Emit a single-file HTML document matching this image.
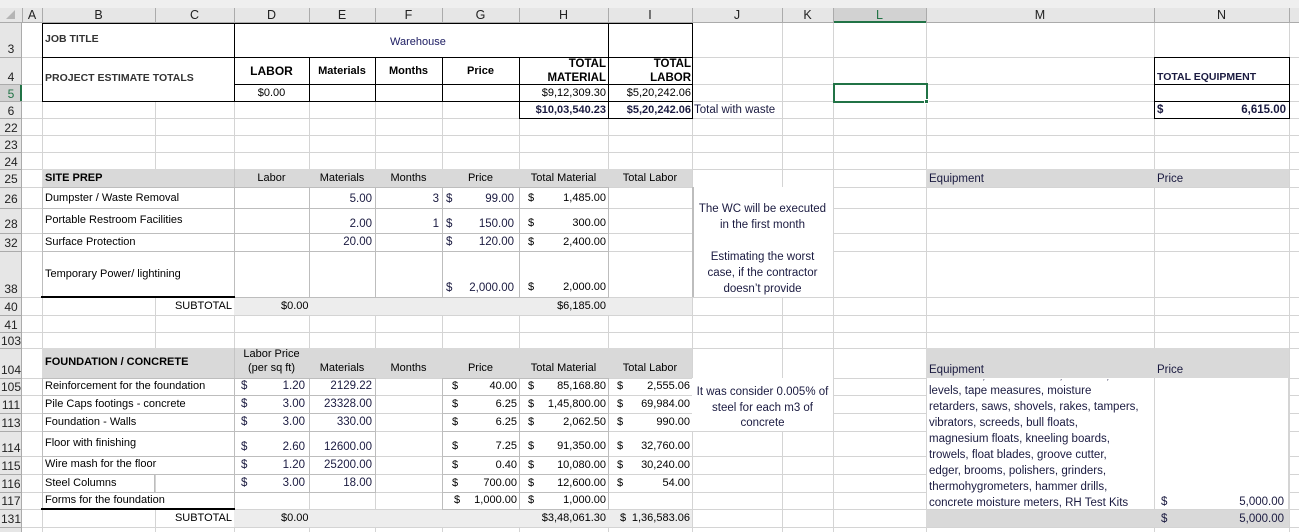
<!DOCTYPE html>
<html><head><meta charset="utf-8"><style>
*{margin:0;padding:0;box-sizing:border-box}
body{width:1299px;height:532px;position:relative;overflow:hidden;background:#fff;font-family:"Liberation Sans",Arial,sans-serif;font-size:11px;color:#000}
div{position:absolute}
.v{width:1px;top:23px;height:509px;background:#d4d4d4}
.h{height:1px;left:22px;width:1277px;background:#d4d4d4}
.t{white-space:nowrap;line-height:14px;height:14px}
.r{text-align:right}
.c{text-align:center}
.ch{top:8px;height:15px;line-height:15px;text-align:center;font-size:12.5px;color:#222}
.rn{left:0;width:22px;text-align:center;font-size:12px;color:#222;line-height:14px}
.n{font-family:"Liberation Sans",sans-serif;color:#1a1a40;font-size:11.5px}
.b{font-weight:bold}
.bx{border:1px solid #000;background:#fff}
.g{border:1px solid #bdbdbd;background:#fff}
</style></head><body>
<div style="left:0;top:0;width:1299px;height:23px;background:#e6e6e6;border-bottom:1px solid #ababab"></div>
<div style="left:0;top:0;width:1299px;height:8px;background:#efefef"></div>
<div style="left:0;top:23px;width:22px;height:509px;background:#e6e6e6;border-right:1px solid #ababab"></div>
<div style="left:833px;top:8px;width:93px;height:15px;background:#d2d2d2;border-bottom:2px solid #217346"></div>
<div style="left:0;top:84px;width:22px;height:17px;background:#d2d2d2;border-right:2px solid #217346"></div>
<div style="left:22px;top:8px;width:1px;height:15px;background:#ababab"></div>
<div style="left:42px;top:8px;width:1px;height:15px;background:#ababab"></div>
<div style="left:155px;top:8px;width:1px;height:15px;background:#ababab"></div>
<div style="left:234px;top:8px;width:1px;height:15px;background:#ababab"></div>
<div style="left:309px;top:8px;width:1px;height:15px;background:#ababab"></div>
<div style="left:375px;top:8px;width:1px;height:15px;background:#ababab"></div>
<div style="left:442px;top:8px;width:1px;height:15px;background:#ababab"></div>
<div style="left:519px;top:8px;width:1px;height:15px;background:#ababab"></div>
<div style="left:608px;top:8px;width:1px;height:15px;background:#ababab"></div>
<div style="left:692px;top:8px;width:1px;height:15px;background:#ababab"></div>
<div style="left:782px;top:8px;width:1px;height:15px;background:#ababab"></div>
<div style="left:833px;top:8px;width:1px;height:15px;background:#ababab"></div>
<div style="left:926px;top:8px;width:1px;height:15px;background:#ababab"></div>
<div style="left:1154px;top:8px;width:1px;height:15px;background:#ababab"></div>
<div style="left:1289px;top:8px;width:1px;height:15px;background:#ababab"></div>
<div class="ch" style="left:22px;width:20px">A</div>
<div class="ch" style="left:42px;width:113px">B</div>
<div class="ch" style="left:155px;width:79px">C</div>
<div class="ch" style="left:234px;width:75px">D</div>
<div class="ch" style="left:309px;width:66px">E</div>
<div class="ch" style="left:375px;width:67px">F</div>
<div class="ch" style="left:442px;width:77px">G</div>
<div class="ch" style="left:519px;width:89px">H</div>
<div class="ch" style="left:608px;width:84px">I</div>
<div class="ch" style="left:692px;width:90px">J</div>
<div class="ch" style="left:782px;width:51px">K</div>
<div class="ch" style="left:833px;width:93px;color:#217346">L</div>
<div class="ch" style="left:926px;width:228px">M</div>
<div class="ch" style="left:1154px;width:135px">N</div>
<div style="left:6px;top:10px;width:0;height:0;border-left:9px solid transparent;border-bottom:9px solid #b5b5b5"></div>
<div class="v" style="left:42px"></div><div class="v" style="left:155px"></div><div class="v" style="left:234px"></div><div class="v" style="left:309px"></div><div class="v" style="left:375px"></div><div class="v" style="left:442px"></div><div class="v" style="left:519px"></div><div class="v" style="left:608px"></div><div class="v" style="left:692px"></div><div class="v" style="left:782px"></div><div class="v" style="left:833px"></div><div class="v" style="left:926px"></div><div class="v" style="left:1154px"></div><div class="v" style="left:1289px"></div>
<div class="h" style="top:57px"></div><div class="h" style="top:84px"></div><div class="h" style="top:101px"></div><div class="h" style="top:118px"></div><div class="h" style="top:135px"></div><div class="h" style="top:152px"></div><div class="h" style="top:169px"></div><div class="h" style="top:187px"></div><div class="h" style="top:208px"></div><div class="h" style="top:233px"></div><div class="h" style="top:251px"></div><div class="h" style="top:297px"></div><div class="h" style="top:315px"></div><div class="h" style="top:332px"></div><div class="h" style="top:348px"></div><div class="h" style="top:378px"></div><div class="h" style="top:395px"></div><div class="h" style="top:413px"></div><div class="h" style="top:431px"></div><div class="h" style="top:456px"></div><div class="h" style="top:474px"></div><div class="h" style="top:492px"></div><div class="h" style="top:509px"></div><div class="h" style="top:527px"></div>
<div style="left:0;top:57px;width:22px;height:1px;background:#ababab"></div><div style="left:0;top:84px;width:22px;height:1px;background:#ababab"></div><div style="left:0;top:101px;width:22px;height:1px;background:#ababab"></div><div style="left:0;top:118px;width:22px;height:1px;background:#ababab"></div><div style="left:0;top:135px;width:22px;height:1px;background:#ababab"></div><div style="left:0;top:152px;width:22px;height:1px;background:#ababab"></div><div style="left:0;top:169px;width:22px;height:1px;background:#ababab"></div><div style="left:0;top:187px;width:22px;height:1px;background:#ababab"></div><div style="left:0;top:208px;width:22px;height:1px;background:#ababab"></div><div style="left:0;top:233px;width:22px;height:1px;background:#ababab"></div><div style="left:0;top:251px;width:22px;height:1px;background:#ababab"></div><div style="left:0;top:297px;width:22px;height:1px;background:#ababab"></div><div style="left:0;top:315px;width:22px;height:1px;background:#ababab"></div><div style="left:0;top:332px;width:22px;height:1px;background:#ababab"></div><div style="left:0;top:348px;width:22px;height:1px;background:#ababab"></div><div style="left:0;top:378px;width:22px;height:1px;background:#ababab"></div><div style="left:0;top:395px;width:22px;height:1px;background:#ababab"></div><div style="left:0;top:413px;width:22px;height:1px;background:#ababab"></div><div style="left:0;top:431px;width:22px;height:1px;background:#ababab"></div><div style="left:0;top:456px;width:22px;height:1px;background:#ababab"></div><div style="left:0;top:474px;width:22px;height:1px;background:#ababab"></div><div style="left:0;top:492px;width:22px;height:1px;background:#ababab"></div><div style="left:0;top:509px;width:22px;height:1px;background:#ababab"></div><div style="left:0;top:527px;width:22px;height:1px;background:#ababab"></div>
<div class="rn" style="top:42px">3</div><div class="rn" style="top:70px">4</div><div class="rn" style="top:87px;color:#217346">5</div><div class="rn" style="top:104px">6</div><div class="rn" style="top:121px">22</div><div class="rn" style="top:138px">23</div><div class="rn" style="top:155px">24</div><div class="rn" style="top:172px">25</div><div class="rn" style="top:192px">26</div><div class="rn" style="top:217px">28</div><div class="rn" style="top:236px">32</div><div class="rn" style="top:282px">38</div><div class="rn" style="top:300px">40</div><div class="rn" style="top:318px">41</div><div class="rn" style="top:334px">103</div><div class="rn" style="top:363px">104</div><div class="rn" style="top:380px">105</div><div class="rn" style="top:398px">111</div><div class="rn" style="top:416px">113</div><div class="rn" style="top:441px">114</div><div class="rn" style="top:459px">115</div><div class="rn" style="top:477px">116</div><div class="rn" style="top:494px">117</div><div class="rn" style="top:512px">131</div>

<div class="bx" style="left:42px;top:23px;width:193px;height:35px"></div>
<div class="bx" style="left:42px;top:57px;width:193px;height:45px"></div>
<div class="bx" style="left:234px;top:23px;width:375px;height:35px"></div>
<div class="bx" style="left:608px;top:23px;width:85px;height:35px"></div>
<div class="bx" style="left:234px;top:57px;width:76px;height:28px"></div>
<div class="bx" style="left:309px;top:57px;width:67px;height:28px"></div>
<div class="bx" style="left:375px;top:57px;width:68px;height:28px"></div>
<div class="bx" style="left:442px;top:57px;width:78px;height:28px"></div>
<div class="bx" style="left:519px;top:57px;width:90px;height:28px"></div>
<div class="bx" style="left:608px;top:57px;width:85px;height:28px"></div>
<div class="bx" style="left:234px;top:84px;width:76px;height:18px"></div>
<div class="bx" style="left:309px;top:84px;width:67px;height:18px"></div>
<div class="bx" style="left:375px;top:84px;width:68px;height:18px"></div>
<div class="bx" style="left:442px;top:84px;width:78px;height:18px"></div>
<div class="bx" style="left:519px;top:84px;width:90px;height:18px"></div>
<div class="bx" style="left:608px;top:84px;width:85px;height:18px"></div>
<div class="bx" style="left:519px;top:101px;width:90px;height:18px"></div>
<div class="bx" style="left:608px;top:101px;width:85px;height:18px"></div>
<div class="bx" style="left:1154px;top:57px;width:136px;height:28px"></div>
<div class="bx" style="left:1154px;top:84px;width:136px;height:18px"></div>
<div class="bx" style="left:1154px;top:101px;width:136px;height:18px"></div>
<div style="left:833px;top:83px;width:95px;height:20px;border:2px solid #217346"></div>
<div style="left:924px;top:99px;width:5px;height:5px;background:#217346;border:1px solid #fff"></div>

<div class="t b" style="left:45px;top:32px;color:#333;font-size:10.5px">JOB TITLE</div>
<div class="t" style="left:390px;top:35px;color:#1a1a60">Warehouse</div>
<div class="t b" style="left:45px;top:71px;color:#333;font-size:10.5px">PROJECT ESTIMATE TOTALS</div>
<div class="t b c" style="left:234px;top:64px;width:75px;font-size:12px">LABOR</div>
<div class="t b c" style="left:309px;top:64px;width:66px">Materials</div>
<div class="t b c" style="left:375px;top:64px;width:67px">Months</div>
<div class="t b c" style="left:442px;top:64px;width:77px">Price</div>
<div class="t b r" style="left:519px;top:57px;width:87px;font-size:11.5px">TOTAL</div>
<div class="t b r" style="left:519px;top:71px;width:87px;font-size:11.5px">MATERIAL</div>
<div class="t b r" style="left:608px;top:57px;width:83px;font-size:11.5px">TOTAL</div>
<div class="t b r" style="left:608px;top:71px;width:83px;font-size:11.5px">LABOR</div>
<div class="t c" style="left:234px;top:86px;width:75px">$0.00</div>
<div class="t r" style="left:519px;top:86px;width:87px">$9,12,309.30</div>
<div class="t r" style="left:608px;top:86px;width:83px">$5,20,242.06</div>
<div class="t b r" style="left:519px;top:103px;width:87px;color:#1a1a40">$10,03,540.23</div>
<div class="t b r" style="left:608px;top:103px;width:83px;color:#1a1a40">$5,20,242.06</div>
<div class="t n" style="left:694px;top:103px">Total with waste</div>
<div class="t b n" style="left:1157px;top:70px;font-size:10.5px">TOTAL EQUIPMENT</div>
<div class="t n b" style="left:1157px;top:103px">$</div>
<div class="t n r b" style="left:1154px;top:103px;width:132px">6,615.00</div>

<div style="left:42px;top:169px;width:650px;height:18px;background:#d9d9d9"></div>
<div style="left:234px;top:169px;width:1px;height:18px;background:#c4c4c4"></div>
<div style="left:926px;top:169px;width:363px;height:18px;background:#d9d9d9"></div>
<div class="t b" style="left:45px;top:171px">SITE PREP</div>
<div class="t c" style="left:234px;top:171px;width:75px">Labor</div>
<div class="t c" style="left:309px;top:171px;width:66px">Materials</div>
<div class="t c" style="left:375px;top:171px;width:67px">Months</div>
<div class="t c" style="left:442px;top:171px;width:77px">Price</div>
<div class="t c" style="left:519px;top:171px;width:89px">Total Material</div>
<div class="t c" style="left:608px;top:171px;width:84px">Total Labor</div>
<div class="t n" style="left:929px;top:172px">Equipment</div>
<div class="t n" style="left:1157px;top:172px">Price</div>

<div class="g" style="left:42px;top:187px;width:193px;height:22px"></div><div class="g" style="left:234px;top:187px;width:76px;height:22px"></div><div class="g" style="left:309px;top:187px;width:67px;height:22px"></div><div class="g" style="left:375px;top:187px;width:68px;height:22px"></div><div class="g" style="left:442px;top:187px;width:78px;height:22px"></div><div class="g" style="left:519px;top:187px;width:90px;height:22px"></div>
<div class="g" style="left:42px;top:208px;width:193px;height:26px"></div><div class="g" style="left:234px;top:208px;width:76px;height:26px"></div><div class="g" style="left:309px;top:208px;width:67px;height:26px"></div><div class="g" style="left:375px;top:208px;width:68px;height:26px"></div><div class="g" style="left:442px;top:208px;width:78px;height:26px"></div><div class="g" style="left:519px;top:208px;width:90px;height:26px"></div>
<div class="g" style="left:42px;top:233px;width:193px;height:19px"></div><div class="g" style="left:234px;top:233px;width:76px;height:19px"></div><div class="g" style="left:309px;top:233px;width:67px;height:19px"></div><div class="g" style="left:375px;top:233px;width:68px;height:19px"></div><div class="g" style="left:442px;top:233px;width:78px;height:19px"></div><div class="g" style="left:519px;top:233px;width:90px;height:19px"></div>
<div class="g" style="left:42px;top:251px;width:193px;height:47px"></div><div class="g" style="left:234px;top:251px;width:76px;height:47px"></div><div class="g" style="left:309px;top:251px;width:67px;height:47px"></div><div class="g" style="left:375px;top:251px;width:68px;height:47px"></div><div class="g" style="left:442px;top:251px;width:78px;height:47px"></div><div class="g" style="left:519px;top:251px;width:90px;height:47px"></div>
<div style="left:41px;top:296px;width:194px;height:2px;background:#000"></div>
<div style="left:692px;top:187px;width:141px;height:110px;background:#fff;border-left:2px solid #bdbdbd"></div>

<div class="t" style="left:45px;top:191px">Dumpster / Waste Removal</div>
<div class="t r n" style="left:309px;top:192px;width:63px">5.00</div>
<div class="t r n" style="left:375px;top:192px;width:64px">3</div>
<div class="t n" style="left:446px;top:192px">$</div><div class="t r n" style="left:442px;top:192px;width:72px">99.00</div>
<div class="t" style="left:528px;top:191px">$</div><div class="t r" style="left:519px;top:191px;width:87px">1,485.00</div>
<div class="t" style="left:45px;top:213px">Portable Restroom Facilities</div>
<div class="t r n" style="left:309px;top:217px;width:63px">2.00</div>
<div class="t r n" style="left:375px;top:217px;width:64px">1</div>
<div class="t n" style="left:446px;top:217px">$</div><div class="t r n" style="left:442px;top:217px;width:72px">150.00</div>
<div class="t" style="left:528px;top:216px">$</div><div class="t r" style="left:519px;top:216px;width:87px">300.00</div>
<div class="t" style="left:45px;top:235px">Surface Protection</div>
<div class="t r n" style="left:309px;top:235px;width:63px">20.00</div>
<div class="t n" style="left:446px;top:235px">$</div><div class="t r n" style="left:442px;top:235px;width:72px">120.00</div>
<div class="t" style="left:528px;top:235px">$</div><div class="t r" style="left:519px;top:235px;width:87px">2,400.00</div>
<div class="t" style="left:45px;top:267px">Temporary Power/ lightining</div>
<div class="t n" style="left:446px;top:281px">$</div><div class="t r n" style="left:442px;top:281px;width:72px">2,000.00</div>
<div class="t" style="left:528px;top:280px">$</div><div class="t r" style="left:519px;top:280px;width:87px">2,000.00</div>
<div class="t n c" style="left:692px;top:202px;width:141px">The WC will be executed</div>
<div class="t n c" style="left:692px;top:218px;width:141px">in the first month</div>
<div class="t n c" style="left:692px;top:250px;width:141px">Estimating the worst</div>
<div class="t n c" style="left:692px;top:266px;width:141px">case, if the contractor</div>
<div class="t n c" style="left:692px;top:282px;width:141px">doesn’t provide</div>

<div style="left:234px;top:298px;width:458px;height:17px;background:#ededed"></div>
<div class="t r" style="left:155px;top:299px;width:77px">SUBTOTAL</div>
<div class="t" style="left:281px;top:299px">$0.00</div>
<div class="t r" style="left:519px;top:299px;width:87px">$6,185.00</div>

<div style="left:42px;top:348px;width:650px;height:30px;background:#d9d9d9"></div>
<div style="left:234px;top:348px;width:1px;height:30px;background:#c4c4c4"></div>
<div style="left:926px;top:348px;width:363px;height:30px;background:#d9d9d9"></div>
<div class="t b" style="left:45px;top:355px">FOUNDATION / CONCRETE</div>
<div class="t c" style="left:234px;top:347px;width:75px">Labor Price</div>
<div class="t c" style="left:234px;top:361px;width:75px">(per sq ft)</div>
<div class="t c" style="left:309px;top:361px;width:66px">Materials</div>
<div class="t c" style="left:375px;top:361px;width:67px">Months</div>
<div class="t c" style="left:442px;top:361px;width:77px">Price</div>
<div class="t c" style="left:519px;top:361px;width:89px">Total Material</div>
<div class="t c" style="left:608px;top:361px;width:84px">Total Labor</div>
<div class="t n" style="left:929px;top:363px">Equipment</div>
<div class="t n" style="left:1157px;top:363px">Price</div>

<div class="g" style="left:42px;top:378px;width:193px;height:18px"></div><div class="g" style="left:234px;top:378px;width:76px;height:18px"></div><div class="g" style="left:309px;top:378px;width:67px;height:18px"></div><div class="g" style="left:442px;top:378px;width:78px;height:18px"></div><div class="g" style="left:519px;top:378px;width:90px;height:18px"></div>
<div class="g" style="left:42px;top:395px;width:193px;height:19px"></div><div class="g" style="left:234px;top:395px;width:76px;height:19px"></div><div class="g" style="left:309px;top:395px;width:67px;height:19px"></div><div class="g" style="left:442px;top:395px;width:78px;height:19px"></div><div class="g" style="left:519px;top:395px;width:90px;height:19px"></div>
<div class="g" style="left:42px;top:413px;width:193px;height:19px"></div><div class="g" style="left:234px;top:413px;width:76px;height:19px"></div><div class="g" style="left:309px;top:413px;width:67px;height:19px"></div><div class="g" style="left:442px;top:413px;width:78px;height:19px"></div><div class="g" style="left:519px;top:413px;width:90px;height:19px"></div>
<div class="g" style="left:42px;top:431px;width:193px;height:26px"></div><div class="g" style="left:234px;top:431px;width:76px;height:26px"></div><div class="g" style="left:309px;top:431px;width:67px;height:26px"></div><div class="g" style="left:442px;top:431px;width:78px;height:26px"></div><div class="g" style="left:519px;top:431px;width:90px;height:26px"></div>
<div class="g" style="left:42px;top:456px;width:193px;height:19px"></div><div class="g" style="left:234px;top:456px;width:76px;height:19px"></div><div class="g" style="left:309px;top:456px;width:67px;height:19px"></div><div class="g" style="left:442px;top:456px;width:78px;height:19px"></div><div class="g" style="left:519px;top:456px;width:90px;height:19px"></div>
<div class="g" style="left:42px;top:474px;width:113px;height:19px"></div><div class="g" style="left:234px;top:474px;width:76px;height:19px"></div><div class="g" style="left:309px;top:474px;width:67px;height:19px"></div><div class="g" style="left:442px;top:474px;width:78px;height:19px"></div><div class="g" style="left:519px;top:474px;width:90px;height:19px"></div>
<div class="g" style="left:42px;top:492px;width:193px;height:18px"></div><div class="g" style="left:442px;top:492px;width:78px;height:18px"></div><div class="g" style="left:519px;top:492px;width:90px;height:18px"></div>
<div style="left:41px;top:508px;width:194px;height:2px;background:#000"></div>
<div style="left:692px;top:378px;width:141px;height:53px;background:#fff"></div>
<div style="left:926px;top:378px;width:363px;height:131px;background:#fff;border-left:1px solid #d4d4d4;border-right:1px solid #d4d4d4"></div>
<div style="left:1154px;top:378px;width:1px;height:131px;background:#d4d4d4"></div>

<div class="t" style="left:45px;top:379px">Reinforcement for the foundation</div>
<div class="t n" style="left:241px;top:379px">$</div><div class="t r n" style="left:234px;top:379px;width:71px">1.20</div>
<div class="t r n" style="left:309px;top:379px;width:63px">2129.22</div>
<div class="t" style="left:452px;top:379px">$</div><div class="t r" style="left:442px;top:379px;width:75px">40.00</div>
<div class="t" style="left:528px;top:379px">$</div><div class="t r" style="left:519px;top:379px;width:87px">85,168.80</div>
<div class="t" style="left:617px;top:379px">$</div><div class="t r" style="left:608px;top:379px;width:82px">2,555.06</div>

<div class="t" style="left:45px;top:397px">Pile Caps footings - concrete</div>
<div class="t n" style="left:241px;top:397px">$</div><div class="t r n" style="left:234px;top:397px;width:71px">3.00</div>
<div class="t r n" style="left:309px;top:397px;width:63px">23328.00</div>
<div class="t" style="left:452px;top:397px">$</div><div class="t r" style="left:442px;top:397px;width:75px">6.25</div>
<div class="t" style="left:528px;top:397px">$</div><div class="t r" style="left:519px;top:397px;width:87px">1,45,800.00</div>
<div class="t" style="left:617px;top:397px">$</div><div class="t r" style="left:608px;top:397px;width:82px">69,984.00</div>

<div class="t" style="left:45px;top:415px">Foundation - Walls</div>
<div class="t n" style="left:241px;top:415px">$</div><div class="t r n" style="left:234px;top:415px;width:71px">3.00</div>
<div class="t r n" style="left:309px;top:415px;width:63px">330.00</div>
<div class="t" style="left:452px;top:415px">$</div><div class="t r" style="left:442px;top:415px;width:75px">6.25</div>
<div class="t" style="left:528px;top:415px">$</div><div class="t r" style="left:519px;top:415px;width:87px">2,062.50</div>
<div class="t" style="left:617px;top:415px">$</div><div class="t r" style="left:608px;top:415px;width:82px">990.00</div>

<div class="t" style="left:45px;top:436px">Floor with finishing</div>
<div class="t n" style="left:241px;top:440px">$</div><div class="t r n" style="left:234px;top:440px;width:71px">2.60</div>
<div class="t r n" style="left:309px;top:440px;width:63px">12600.00</div>
<div class="t" style="left:452px;top:439px">$</div><div class="t r" style="left:442px;top:439px;width:75px">7.25</div>
<div class="t" style="left:528px;top:439px">$</div><div class="t r" style="left:519px;top:439px;width:87px">91,350.00</div>
<div class="t" style="left:617px;top:439px">$</div><div class="t r" style="left:608px;top:439px;width:82px">32,760.00</div>

<div class="t" style="left:45px;top:457px">Wire mash for the floor</div>
<div class="t n" style="left:241px;top:458px">$</div><div class="t r n" style="left:234px;top:458px;width:71px">1.20</div>
<div class="t r n" style="left:309px;top:458px;width:63px">25200.00</div>
<div class="t" style="left:452px;top:458px">$</div><div class="t r" style="left:442px;top:458px;width:75px">0.40</div>
<div class="t" style="left:528px;top:458px">$</div><div class="t r" style="left:519px;top:458px;width:87px">10,080.00</div>
<div class="t" style="left:617px;top:458px">$</div><div class="t r" style="left:608px;top:458px;width:82px">30,240.00</div>

<div class="t" style="left:45px;top:476px">Steel Columns</div>
<div class="t n" style="left:241px;top:476px">$</div><div class="t r n" style="left:234px;top:476px;width:71px">3.00</div>
<div class="t r n" style="left:309px;top:476px;width:63px">18.00</div>
<div class="t" style="left:452px;top:476px">$</div><div class="t r" style="left:442px;top:476px;width:75px">700.00</div>
<div class="t" style="left:528px;top:476px">$</div><div class="t r" style="left:519px;top:476px;width:87px">12,600.00</div>
<div class="t" style="left:617px;top:476px">$</div><div class="t r" style="left:608px;top:476px;width:82px">54.00</div>

<div class="t" style="left:45px;top:493px">Forms for the foundation</div>
<div class="t" style="left:454px;top:493px">$</div><div class="t r" style="left:442px;top:493px;width:75px">1,000.00</div>
<div class="t" style="left:528px;top:493px">$</div><div class="t r" style="left:519px;top:493px;width:87px">1,000.00</div>

<div class="t n c" style="left:692px;top:385px;width:141px">It was consider 0.005% of</div>
<div class="t n c" style="left:692px;top:401px;width:141px">steel for each m3 of</div>
<div class="t n c" style="left:692px;top:416px;width:141px">concrete</div>

<div style="left:927px;top:379px;width:226px;height:129px;overflow:hidden">
<div class="t n" style="left:2px;top:-11px;line-height:16px;height:16px">hand tools, wheelbarrows, screeds,</div>
<div class="t n" style="left:2px;top:4px;line-height:16px;height:16px">levels, tape measures, moisture</div>
<div class="t n" style="left:2px;top:20px;line-height:16px;height:16px">retarders, saws, shovels, rakes, tampers,</div>
<div class="t n" style="left:2px;top:36px;line-height:16px;height:16px">vibrators, screeds, bull floats,</div>
<div class="t n" style="left:2px;top:52px;line-height:16px;height:16px">magnesium floats, kneeling boards,</div>
<div class="t n" style="left:2px;top:68px;line-height:16px;height:16px">trowels, float blades, groove cutter,</div>
<div class="t n" style="left:2px;top:84px;line-height:16px;height:16px">edger, brooms, polishers, grinders,</div>
<div class="t n" style="left:2px;top:100px;line-height:16px;height:16px">thermohygrometers, hammer drills,</div>
<div class="t n" style="left:2px;top:116px;line-height:16px;height:16px">concrete moisture meters, RH Test Kits</div>
</div>
<div class="t n" style="left:1161px;top:495px">$</div><div class="t r n" style="left:1154px;top:495px;width:130px">5,000.00</div>

<div style="left:234px;top:510px;width:458px;height:17px;background:#ededed"></div>
<div style="left:926px;top:510px;width:363px;height:17px;background:#d9d9d9"></div>
<div class="t r" style="left:155px;top:511px;width:77px">SUBTOTAL</div>
<div class="t" style="left:281px;top:511px">$0.00</div>
<div class="t r" style="left:519px;top:511px;width:87px">$3,48,061.30</div>
<div class="t" style="left:620px;top:511px">$</div><div class="t r" style="left:608px;top:511px;width:82px">1,36,583.06</div>
<div class="t n" style="left:1161px;top:512px">$</div><div class="t r n" style="left:1154px;top:512px;width:130px">5,000.00</div>
</body></html>
